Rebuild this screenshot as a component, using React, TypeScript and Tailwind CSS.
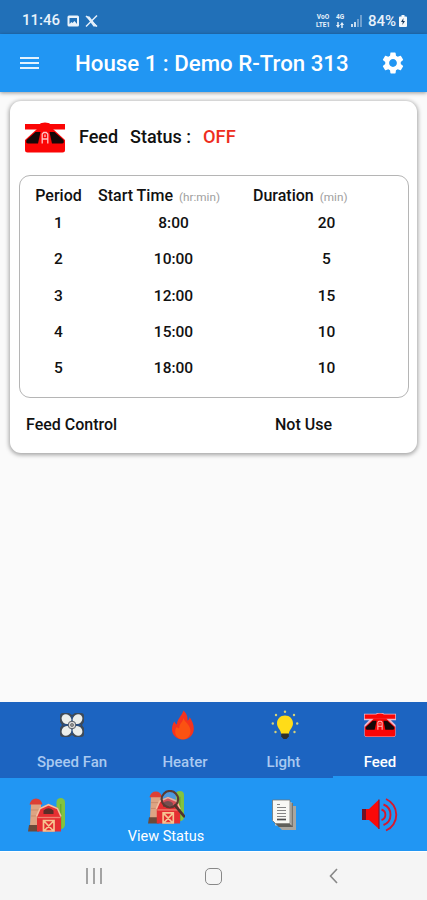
import type { ReactNode } from 'react'
import { MdSettings } from 'react-icons/md'
import clsx from 'clsx'

interface FeedPeriod {
  period: number
  start: string
  duration: number
}

const FEED_PERIODS: FeedPeriod[] = [
  { period: 1, start: '8:00', duration: 20 },
  { period: 2, start: '10:00', duration: 5 },
  { period: 3, start: '12:00', duration: 15 },
  { period: 4, start: '15:00', duration: 10 },
  { period: 5, start: '18:00', duration: 10 },
]

function FeederIcon({ className, outline }: { className?: string; outline?: boolean }) {
  return (
    <svg viewBox="0 0 42 31" preserveAspectRatio="none" className={className}>
      {outline && (
        <path
          d="M1 2H16Q17 0.500 21 0.500T26 2H41V8.500H33L40.500 16V28Q40.500 30 38 30H4Q1.500 30 1.500 28V16L9 8.500H1Z"
          fill="#e9b9cd"
          stroke="#e9b9cd"
          strokeWidth="2"
        />
      )}
      <path d="M1 2H16Q17 0.500 21 0.500T26 2H41V7.500H1Z" fill="#fb0505" />
      <path d="M13 7H29L41 18V28Q41 30.500 38.500 30.500H3.500Q1 30.500 1 28V18Z" fill="#fb0505" />
      <path d="M11.500 10L2.500 18Q1.500 21.500 4 21.500H14L16.500 10Z" fill="#160808" />
      <path d="M30.500 10L39.500 18Q40.500 21.500 38 21.500H28L25.500 10Z" fill="#160808" />
      <path d="M18.200 21.500V12L19.700 10.500H22.300L23.800 12V21.500M18.500 17H23.500M21 12.500V15" stroke="#ffc4c4" strokeWidth="1.300" fill="none" />
    </svg>
  )
}

function FanIcon() {
  return (
    <svg viewBox="0 0 26 26" className="h-[26px] w-[26px]">
      <path d="M4 1H10L13 3L16 1H22Q25 1 25 4V10L23 13L25 16V22Q25 25 22 25H16L13 23L10 25H4Q1 25 1 22V16L3 13L1 10V4Q1 1 4 1Z" fill="#3e4a58" />
      <path d="M13 4V22M4 13H22" stroke="#2a4e80" strokeWidth="2" />
      <g fill="#eceeeb">
        <ellipse cx="7.500" cy="7.200" rx="5.300" ry="4.500" transform="rotate(45 7.500 7.200)" />
        <ellipse cx="18.500" cy="7.200" rx="5.300" ry="4.500" transform="rotate(-45 18.500 7.200)" />
        <ellipse cx="7.500" cy="18.800" rx="5.300" ry="4.500" transform="rotate(-45 7.500 18.800)" />
        <ellipse cx="18.500" cy="18.800" rx="5.300" ry="4.500" transform="rotate(45 18.500 18.800)" />
      </g>
      <circle cx="13" cy="13" r="3.800" fill="#dcdcdc" stroke="#555b64" />
      <circle cx="13" cy="13" r="1.500" fill="#999" stroke="#666" strokeWidth="0.800" />
    </svg>
  )
}

function FlameIcon() {
  return (
    <svg viewBox="0 0 24 30" className="mr-[4px] h-[30px] w-6">
      <path
        d="M12.500 0.500C15 3 17 6 16.500 10.500C18 10 18.500 8.500 18.600 7C21 10.500 23 14.500 22.800 19C22.600 25 18 29.500 12 29.500C5.500 29.500 1 25 1 19.500C1 16 2 13.500 3.300 11.500C4 13 4.800 14 6 14.500C6 9 10.500 6.500 12.500 0.500Z"
        fill="#f4331d"
      />
      <path
        d="M12.500 8C13.500 12 19.500 15 19.500 21C19.500 26 16 29.300 12 29.300C7.500 29.300 4 26 4.200 21.500C4.300 19 5 18 6 16.800C6.500 18 7.500 18.500 8.300 18.300C7.800 14 12 12 12.500 8Z"
        fill="#fb5212"
      />
    </svg>
  )
}

function BulbIcon() {
  return (
    <svg viewBox="0 0 28 30" className="ml-[2px] h-[30px] w-7">
      <g fill="#d4d27a">
        <circle cx="14" cy="1.800" r="1.200" />
        <circle cx="5" cy="5" r="1.200" />
        <circle cx="23" cy="5" r="1.200" />
        <circle cx="1.800" cy="13.500" r="1.200" />
        <circle cx="26.200" cy="13.500" r="1.200" />
        <circle cx="4.500" cy="22" r="1.200" />
        <circle cx="23.500" cy="22" r="1.200" />
      </g>
      <path d="M14 5.500C18.700 5.500 22 9 22 13.300C22 18 18.300 19.500 17.800 24H10.200C9.700 19.500 6 18 6 13.300C6 9 9.300 5.500 14 5.500Z" fill="#ffdc18" />
      <path d="M10.200 23.500H17.800V26.500L15.500 29H12.500L10.200 26.500Z" fill="#30302c" />
    </svg>
  )
}

// silo, tree and barn; the "view" variant has a magnifier lying over it
function BarnIcon({ magnifier, className }: { magnifier?: boolean; className?: string }) {
  return (
    <svg viewBox="0 0 38 35" className={className}>
      <rect x="28.500" y="1" width="8.500" height="31" rx="4.200" fill="#82c340" />
      <path d="M32.700 7V32" stroke="#69a832" strokeWidth="1.500" />
      <path d="M3 7H13V29H2Z" fill="#dda483" />
      <path d="M3 13H11M3 19H9" stroke="#c98b6b" strokeWidth="1" />
      <path d="M1.500 7.500Q3 1.500 8 1.500T14.500 7.500Z" fill="#dc4035" />
      <path d="M1 28H11V34.500H0Z" fill="#6b4a3a" />
      <path d="M9 19L12 11L20.500 7L30 11L33 19V34.500H9Z" fill="#e52f32" />
      <path d="M8.500 19.500L12 11.500L20.500 7.700L29.500 11.500L33 19.500" fill="none" stroke="#f2c0a0" strokeWidth="1.600" />
      <path d="M9.500 20.500H32.500" stroke="#ee8270" strokeWidth="1.300" />
      <path d="M15.500 17V13.500Q20.500 9 25.500 13.500V17Z" fill="#5b2d28" />
      <path d="M15.500 23.500H26V34H15.500ZM16 24L25.500 34M25.500 24L16 34" fill="none" stroke="#f6c591" strokeWidth="1.700" />
      {magnifier && (
        <>
          <circle cx="22.500" cy="9.500" r="8.500" fill="#b0a0b0" fillOpacity="0.300" stroke="#5b3932" strokeWidth="2.200" />
          <path d="M28 16L37 27" stroke="#50332f" strokeWidth="2.800" strokeLinecap="round" />
        </>
      )}
    </svg>
  )
}

function ReportIcon() {
  return (
    <svg viewBox="0 0 26 32" className="h-8 w-[26px]">
      <path d="M8 7H25V31H11L8 28Z" fill="#a9a69f" />
      <path d="M5 4H22V28H8L5 25Z" fill="#77756f" />
      <path d="M4 3H20.500V26.500H4Z" fill="#c5c3bd" />
      <path d="M1.500 1H19V24.500H4.500L1.500 21.500Z" fill="#f8f8f4" stroke="#77756f" strokeWidth="0.800" />
      <path d="M6 5.500H9M6 8.500H15M6 11.500H15M6 14.500H15M6 17.500H15" stroke="#858585" strokeWidth="1.200" />
      <path d="M6 20.500H15" stroke="#4e4e4e" strokeWidth="1.700" />
      <path d="M1.500 22L5 25H19L22 28H8Z" fill="#605f5a" />
    </svg>
  )
}

function SpeakerIcon() {
  return (
    <svg viewBox="0 0 38 35" className="h-[35px] w-[38px]">
      <path d="M1 12H8L18 2.500V32L8 23H1Z" fill="#fa0909" />
      <path d="M1 12H5V23H1Z" fill="#701224" />
      <path d="M18 2.500V32" stroke="#8d1230" strokeWidth="1.200" />
      <g fill="none" stroke="#d7182d" strokeWidth="1.900">
        <path d="M20.500 12.500A5.500 5.500 0 0 1 20.500 23" />
        <path d="M22.500 7.500A11 11 0 0 1 22.500 28" />
        <path d="M25 2A17.200 17.200 0 0 1 25 33.500" />
      </g>
    </svg>
  )
}

function StatusBar() {
  return (
    <div className="flex h-[34px] items-center bg-[#2170b8] pt-[7px] pl-[22px] text-[#e8f2fb]">
      <span className="w-[39px] text-[15px] leading-none font-medium">11:46</span>
      <svg viewBox="0 0 32 14" className="ml-[6px] h-[14px] w-8">
        <rect x="0.500" y="1.500" width="11.500" height="11" rx="1.500" fill="#eaf3fb" />
        <path d="M2.500 4H10V10L7.500 7L5.500 9L4.500 8L2.500 10Z" fill="#2170b8" />
        <path d="M19 2L30 12.500M30 1.500L19 12.500" stroke="#e4effa" strokeWidth="1.500" />
        <path d="M19 2L22.500 2.500L30 12.500H26.500Z" fill="#e4effa" />
      </svg>
      <div className="ml-auto flex items-center pr-[20px]">
        <div className="mr-[4px] w-4 text-center text-[6.500px] leading-[8px] font-bold">
          <div>VoO</div>
          <div>LTE1</div>
        </div>
        <div className="mr-[6px] flex w-[10px] flex-col items-center text-[6.500px] leading-[8px] font-bold">
          <div>4G</div>
          <svg viewBox="0 0 8 6" className="mt-[1px] h-[6px] w-2">
            <path d="M0 3L2 6L4 3H2.700V0H1.300V3ZM4 3L6 0L8 3H6.700V6H5.300V3Z" fill="#e8f2fb" />
          </svg>
        </div>
        <svg viewBox="0 0 11 12" className="mr-[6px] h-3 w-[11px]">
          <path d="M0 9H2V12H0ZM3 7H5V12H3Z" fill="#c7dcf0" />
          <path d="M6 4H8V12H6ZM9 0H11V12H9Z" fill="#6fa0cf" />
        </svg>
        <span className="w-[31px] pt-[1px] text-[15px] leading-none font-medium whitespace-nowrap">84%</span>
        <svg viewBox="0 0 8 12" className="h-3 w-2">
          <path d="M2.500 0H5.500V1.500H7Q8 1.500 8 2.500V11Q8 12 7 12H1Q0 12 0 11V2.500Q0 1.500 1 1.500H2.500Z" fill="#f3f8fc" />
          <path d="M4.500 3L2 7H3.800L3.300 10L6 6H4.200Z" fill="#17385c" />
        </svg>
      </div>
    </div>
  )
}

function AppBar() {
  return (
    <header className="z-10 flex h-[58px] items-center bg-[#2196f3] px-5 text-white shadow-[0_1px_4px_rgba(0,0,0,0.4)]">
      <div className="flex w-[19px] flex-col gap-[3px]">
        <div className="h-[2px] bg-[#e3f2fd]" />
        <div className="h-[2px] bg-[#e3f2fd]" />
        <div className="h-[2px] bg-[#e3f2fd]" />
      </div>
      <h1 className="ml-9 w-[290px] pt-[1px] text-[22.250px] leading-none font-medium whitespace-nowrap">House 1 : Demo R-Tron 313</h1>
      <MdSettings size={26} className="ml-[15px] shrink-0" />
    </header>
  )
}

function FeedCard() {
  return (
    <section className="mx-[10px] mt-[9px] h-[352px] rounded-[11px] bg-white px-[10px] text-[15.500px] font-medium text-[#111] shadow-[0_1px_4px_1px_rgba(0,0,0,0.35)]">
      <div className="flex h-[74px] items-center pb-[3px] text-[18px]">
        <FeederIcon className="mt-[2px] ml-1 h-[31px] w-[42px]" />
        <span className="ml-[13px] w-[51px]">Feed</span>
        <span className="w-[73px]">Status :</span>
        <span className="text-[18.250px] text-[#ee2d20]">OFF</span>
      </div>

      <div className="-ml-[1px] h-[223px] w-[390px] rounded-[11px] border border-[#b5b5b5] pt-[9px]">
        <div className="mb-[1px] flex h-[21px] items-center text-[16px] whitespace-nowrap">
          <span className="w-[77px] text-center">Period</span>
          <span className="ml-[1px] w-[155px]">
            Start Time<span className="ml-[6px] text-[11.750px] font-normal text-[#a0a0a0]">(hr:min)</span>
          </span>
          <span>
            Duration<span className="ml-[6px] text-[11.750px] font-normal text-[#a0a0a0]">(min)</span>
          </span>
        </div>
        {FEED_PERIODS.map(row => (
          <div key={row.period} className="grid h-[36.250px] grid-cols-[77px_153px_153px] pt-[5px] text-center leading-[23px]">
            <span>{row.period}</span>
            <span>{row.start}</span>
            <span>{row.duration}</span>
          </div>
        ))}
      </div>

      <div className="flex h-[53px] items-center pl-[6px] text-[16px]">
        <span className="w-[249px]">Feed Control</span>
        <span>Not Use</span>
      </div>
    </section>
  )
}

function Tab({ label, active, className, children }: { label: string; active?: boolean; className: string; children: ReactNode }) {
  return (
    <button
      className={clsx(
        'flex h-full shrink-0 flex-col items-center border-b-2 pt-[7px] text-[15px] font-medium',
        active ? 'border-[#2196f3] text-white' : 'border-transparent text-[#a9c9f0]',
        className,
      )}
    >
      <span className="flex h-8 items-center justify-center">{children}</span>
      <span className="mt-[11px] leading-5">{label}</span>
    </button>
  )
}

function BottomBars() {
  return (
    <footer className="mt-auto">
      <div className="flex h-[76px] bg-[#1c64c1] pl-2">
        <Tab label="Speed Fan" className="w-32">
          <FanIcon />
        </Tab>
        <Tab label="Heater" className="w-[98px]">
          <FlameIcon />
        </Tab>
        <Tab label="Light" className="w-[99px]">
          <BulbIcon />
        </Tab>
        <Tab label="Feed" active className="w-[94px]">
          <FeederIcon outline className="h-[24px] w-8" />
        </Tab>
      </div>

      <nav className="flex h-[73px] bg-[#2196f3] text-white">
        <button className="flex w-[94px] items-center justify-center">
          <BarnIcon className="h-[35px] w-[38px]" />
        </button>
        <button className="flex w-36 flex-col items-center pt-3">
          <BarnIcon magnifier className="h-[34px] w-[37px]" />
          <span className="mt-[3px] text-[14.500px] leading-5">View Status</span>
        </button>
        <button className="flex w-[91px] items-center justify-center">
          <ReportIcon />
        </button>
        <button className="flex flex-1 items-center justify-center pl-1">
          <SpeakerIcon />
        </button>
      </nav>

      <div className="flex h-[49px] items-center border-t border-white bg-[#f5f5f5] pl-[86px]">
        <svg viewBox="0 0 16 16" className="h-4 w-4">
          <path d="M1 0V16M8 0V16M15 0V16" stroke="#888" strokeWidth="1.500" />
        </svg>
        <div className="ml-[103px] h-[17px] w-[17px] rounded-[5px] border-[1.500px] border-[#888]" />
        <svg viewBox="0 0 9 16" className="ml-[107px] h-4 w-[9px]">
          <path d="M8 1L1.500 8L8 15" fill="none" stroke="#888" strokeWidth="1.600" />
        </svg>
      </div>
    </footer>
  )
}

export default function App() {
  return (
    <div className="flex h-screen w-full flex-col overflow-hidden bg-[#fafafa] font-[Roboto,sans-serif]">
      <StatusBar />
      <AppBar />
      <FeedCard />
      <BottomBars />
    </div>
  )
}
